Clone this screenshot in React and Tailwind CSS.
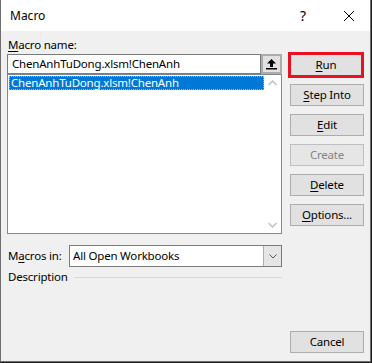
import React from "react";

const U = ({ children }) => <span className="underline underline-offset-[2px]">{children}</span>;

function Btn({ children, disabled, className = "" }) {
  return (
    <div
      className={
        "h-[22px] w-[74px] flex items-center justify-center border leading-[16px] " +
        (disabled ? "text-[#838383] border-[#bfbfbf] bg-[#e6e6e6] " : "text-black border-[#adadad] bg-[#e1e1e1] ") +
        className
      }
    >
      {children}
    </div>
  );
}

export default function App() {
  return (
    <div className="w-[372px] h-[363px] bg-[#1e1e1e] font-['Noto_Sans','Open_Sans',sans-serif]">
      <div className="w-[371px] h-[362px] flex flex-col bg-[#f0f0f0] border-l border-r border-b border-[#6e6e6e]">
        {/* title bar */}
        <div className="h-[31px] bg-white flex items-center shrink-0">
          <div className="pl-[9px] text-[12px] text-black">Macro</div>
          <div className="ml-auto w-[14px] text-center text-[14px] leading-none text-black mr-[33px]">?</div>
          <svg width="12" height="12" viewBox="0 0 12 12" className="mr-[15px]">
            <path d="M1 1 L11 11 M11 1 L1 11" stroke="#000" strokeWidth="1" fill="none" />
          </svg>
        </div>

        {/* body */}
        <div className="flex-1 flex flex-col pl-[6px] pr-[6px] text-[11.5px] tracking-[-0.2px] text-black">
          <div className="flex pt-[6px]">
            {/* left column */}
            <div className="w-[275px] flex flex-col">
              <div className="h-[16px] leading-[16px] pl-[1px]">
                <U>M</U>acro name:
              </div>
              <div className="mt-[1px] h-[20px] flex">
                <div className="flex-1 h-full bg-white border border-[#7a7a7a] flex items-center pl-[4px] leading-[16px]">
                  ChenAnhTuDong.xlsm!ChenAnh
                </div>
                <div className="w-[21px] h-full bg-[#e1e1e1] border-2 border-[#adadad] flex items-center justify-center">
                  <svg width="11" height="12" viewBox="0 0 11 12">
                    <path d="M5.5 1 L10 5.5 L7 5.5 L7 9 L4 9 L4 5.5 L1 5.5 Z" fill="#000" />
                    <rect x="0" y="10" width="11" height="1.5" fill="#000" />
                  </svg>
                </div>
              </div>
              <div className="h-[160px] bg-white border border-[#828790] flex">
                <div className="flex-1 pt-[1px] pl-[1px]">
                  <div className="h-[14px] bg-[#0078d7] border border-dotted border-[#f0a050] text-white flex items-center pl-[1px] leading-[14px]">
                    ChenAnhTuDong.xlsm!ChenAnh
                  </div>
                </div>
                <div className="w-[17px] flex flex-col items-center justify-between py-[5px]">
                  <svg width="9" height="6" viewBox="0 0 9 6">
                    <path d="M0.5 5 L4.5 1 L8.5 5" stroke="#c2c2c2" strokeWidth="1.5" fill="none" />
                  </svg>
                  <svg width="9" height="6" viewBox="0 0 9 6">
                    <path d="M0.5 1 L4.5 5 L8.5 1" stroke="#c2c2c2" strokeWidth="1.5" fill="none" />
                  </svg>
                </div>
              </div>
              <div className="mt-[11px] h-[22px] flex items-center">
                <div className="w-[62px] pl-[1px] leading-[16px]">
                  M<U>a</U>cros in:
                </div>
                <div className="flex-1 h-full bg-white border border-[#7a7a7a] flex">
                  <div className="flex-1 flex items-center pl-[3px] leading-[16px]">All Open Workbooks</div>
                  <div className="w-[18px] h-full bg-[#e5e5e5] border-l border-[#b0b0b0] flex items-center justify-center">
                    <svg width="8" height="5" viewBox="0 0 8 5">
                      <path d="M0.5 0.5 L4 4 L7.5 0.5" stroke="#555" strokeWidth="1" fill="none" />
                    </svg>
                  </div>
                </div>
              </div>
              <div className="mt-[2px] h-[16px] flex items-center">
                <div className="pl-[1px] leading-[16px]">Description</div>
                <div className="flex-1 ml-[6px] h-px bg-[#d7d7d7]" />
              </div>
            </div>

            {/* right column */}
            <div className="ml-[6px] pt-[15px] flex flex-col">
              <div className="w-[76px] h-[26px] border-[3px] border-[#e81123] bg-[#e1e1e1] flex items-center justify-center leading-[16px]">
                <U>R</U>un
              </div>
              <div className="ml-[2px] mt-[6px] flex flex-col gap-[8px]">
                <Btn>
                  <U>S</U>tep Into
                </Btn>
                <Btn>
                  <U>E</U>dit
                </Btn>
                <Btn disabled>Create</Btn>
                <Btn>
                  <U>D</U>elete
                </Btn>
                <Btn>
                  <U>O</U>ptions...
                </Btn>
              </div>
            </div>
          </div>

          <div className="mt-auto pb-[8px] flex justify-end">
            <Btn>Cancel</Btn>
          </div>
        </div>
      </div>
    </div>
  );
}
